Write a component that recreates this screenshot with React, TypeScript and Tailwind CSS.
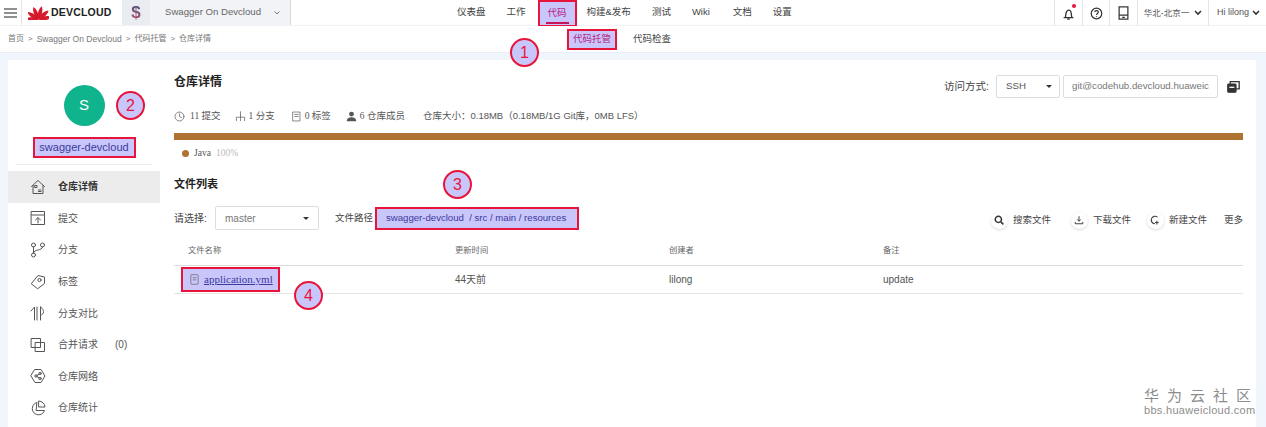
import type { ReactNode } from 'react';

const navItems = ['仪表盘', '工作', '代码', '构建&发布', '测试', 'Wiki', '文档', '设置'];

function Svg({ children, size = 16 }: { children: ReactNode; size?: number }) {
  return (
    <svg width={size} height={size} viewBox="0 0 16 16" fill="none" stroke="currentColor" strokeWidth="1" strokeLinecap="round" strokeLinejoin="round" className="shrink-0">
      {children}
    </svg>
  );
}

const sideItems: { label: string; extra?: string; active?: boolean; icon: ReactNode }[] = [
  {
    label: '仓库详情',
    active: true,
    icon: <Svg><path d="M1.5 7.5 8 1.5l6.5 6" /><path d="M3 6.5v8h10v-8" /><path d="M5 6.5h2v2H5zM8.5 11h2.5M8.5 12.5h2.5" /></Svg>,
  },
  {
    label: '提交',
    icon: <Svg><rect x="1.5" y="1.5" width="13" height="13" /><path d="M1.5 5h13M8 13v-5M5.5 10 8 7.5l2.5 2.5" /></Svg>,
  },
  {
    label: '分支',
    icon: <Svg><circle cx="3.5" cy="3" r="2" /><circle cx="12.5" cy="3" r="2" /><circle cx="3.5" cy="13" r="2" /><path d="M3.5 5v6M12.5 5c0 4-9 2-9 6" /></Svg>,
  },
  {
    label: '标签',
    icon: <Svg><path d="M1.5 9.5 8 1.5l6.5 1.5v6.5l-6.5 5z" /><circle cx="9.5" cy="6" r="1.6" /></Svg>,
  },
  {
    label: '分支对比',
    icon: <Svg><path d="M1 6 4.5 2v13M7 2v13M10.5 15V2M10.5 2c3 2 3 4 3 5s-1 3-3 3" /></Svg>,
  },
  {
    label: '合并请求',
    extra: '(0)',
    icon: <Svg><rect x="1.5" y="1.5" width="9" height="9" /><rect x="5.5" y="5.5" width="9" height="9" /></Svg>,
  },
  {
    label: '仓库网络',
    icon: <Svg><path d="M5 1.5h6L15 8l-4 6.5H5L1 8z" /><circle cx="6" cy="8" r="1.2" /><circle cx="10" cy="5.5" r="1.2" /><circle cx="10" cy="10.5" r="1.2" /><path d="m7 7.4 2-1.3M7 8.6l2 1.3" /></Svg>,
  },
  {
    label: '仓库统计',
    icon: <Svg><path d="M6.5 2.5a6.3 6.3 0 1 0 8 8H6.5z" /><path d="M9 1a6.3 6.3 0 0 1 6 6H9z" /></Svg>,
  },
];

function Callout({ n, className }: { n: number; className: string }) {
  return (
    <div className={`absolute w-[29px] h-[29px] rounded-full border-2 border-[#e8153a] bg-[#c9c6fb] text-[#e8153a] text-[16px] flex items-center justify-center ${className}`}>
      {n}
    </div>
  );
}

function Logo() {
  const angles = [-84, -52, -18, 18, 52, 84];
  return (
    <svg width="21" height="15" viewBox="0 0 21 15" className="shrink-0">
      {angles.map(a => (
        <path key={a} d="M10.5 14.5C7 10 7.5 4 9.5 1c2.5 3 3.5 9 1 13.5z" fill="#d6192c" transform={`rotate(${a} 10.5 14.5)`} />
      ))}
    </svg>
  );
}

function Chevron() {
  return (
    <svg width="8" height="6" viewBox="0 0 8 6" fill="none" stroke="#333" strokeWidth="1.6" className="shrink-0">
      <path d="m1 1 3 3 3-3" />
    </svg>
  );
}

function Caret() {
  return <span className="w-0 h-0 border-x-[3px] border-x-transparent border-t-[3px] border-t-[#333]" />;
}

function Action({ label, icon }: { label: string; icon: ReactNode }) {
  return (
    <div className="flex items-center gap-[5px]">
      <span className="w-[17px] h-[17px] rounded-full bg-white shadow-[0_1px_3px_rgba(0,0,0,0.15)] flex items-center justify-center text-[#444]">
        {icon}
      </span>
      <span>{label}</span>
    </div>
  );
}

export default function App() {
  return (
    <div className="relative w-[1266px] h-[427px] overflow-hidden bg-[#f1f5fc] text-[#444] text-[10px] font-['Liberation_Sans','Noto_Sans_CJK_SC',sans-serif]">
      {/* top bar */}
      <div className="relative h-[26px] bg-white flex items-stretch border-b border-[#f0f2f5]">
        <div className="w-[22px] flex items-center justify-center border-r border-[#e5e5e5]">
          <svg width="13" height="10" viewBox="0 0 13 10" stroke="#222" strokeWidth="1.2">
            <path d="M0 1h13M0 5h13M0 9h13" />
          </svg>
        </div>
        <div className="w-[100px] flex items-center gap-[2px] pl-[6px]">
          <Logo />
          <span className="text-[#222] font-bold text-[10.5px] tracking-[0.2px]">DEVCLOUD</span>
        </div>
        <div className="w-[28px] bg-[#e9ecf1] flex items-center justify-center text-[17px] font-bold">
          <span className="bg-linear-to-b from-[#23527f] to-[#d0386a] bg-clip-text text-transparent">$</span>
        </div>
        <div className="w-[141px] bg-[#f1f3f6] border-r border-[#d9d9d9] flex items-center pl-[15px] gap-[13px] text-[9.6px] text-[#666]">
          Swagger On Devcloud
          <svg width="6" height="4" viewBox="0 0 6 4" fill="none" stroke="#777"><path d="m.5.5 2.5 2.5L5.5.5" /></svg>
        </div>
        <nav className="ml-[166px] flex items-center gap-[21px] text-[9.5px] text-[#444]">
          {navItems.map(item =>
            item === '代码' ? (
              <span key={item} className="-ml-[9px] -mr-[11px] relative h-[27px] w-[39px] mt-px flex items-center justify-center border-2 border-[#e8153a] bg-[#c9c6fb] text-[#b5207f]">
                {item}
                <span className="absolute bottom-[1px] left-[6px] right-[6px] h-[1.5px] bg-[#c2185b]" />
              </span>
            ) : (
              <span key={item} className={item === 'Wiki' ? 'mr-[2px]' : ''}>{item}</span>
            ),
          )}
        </nav>
        <div className="absolute right-0 top-0 h-[26px] flex items-stretch text-[#333]">
          <div className="w-[28px] border-l border-[#e5e5e5] flex items-center justify-center relative">
            <svg width="13" height="13" viewBox="0 0 16 16" fill="none" stroke="#333" strokeWidth="1.6"><path d="M2 13h12M4 13c1-2 0-4 1.5-7C7 3 10 3 11 6c1 3 0 5 1.5 7M6.5 15h3" /></svg>
            <span className="absolute top-[4px] right-[6px] w-[4px] h-[4px] rounded-full bg-[#e8153a]" />
          </div>
          <div className="w-[27px] border-l border-[#e5e5e5] flex items-center justify-center">
            <svg width="13" height="13" viewBox="0 0 16 16" fill="none" stroke="#333" strokeWidth="1.5"><circle cx="8" cy="8" r="6.5" /><path d="M5.8 6.2C6 3.8 10.2 4 10.2 6.3 10.2 8 8 8 8 9.8M8 11.3v1" /></svg>
          </div>
          <div className="w-[28px] border-l border-[#e5e5e5] flex items-center justify-center">
            <svg width="13" height="14" viewBox="0 0 14 16" fill="none" stroke="#333" strokeWidth="1.4"><rect x="2" y="1" width="10" height="14" /><path d="M2 10.5h10M5.5 13h3" /></svg>
          </div>
          <div className="w-[71px] border-l border-[#e5e5e5] flex items-center justify-center gap-[5px] text-[8.5px] text-[#555]">
            华北-北京一 <Chevron />
          </div>
          <div className="w-[58px] border-l border-[#e5e5e5] flex items-center pl-[8px] gap-[3px] text-[9px] text-[#555]">
            Hi lilong <Chevron />
          </div>
        </div>
      </div>

      {/* breadcrumb and sub nav */}
      <div className="relative h-[27px] bg-white border-b border-[#e6edf7] flex items-center pl-[8px] text-[8px] text-[#777] gap-[4px]">
        <span>首页</span><span>&gt;</span><span className="text-[8.5px]">Swagger On Devcloud</span><span>&gt;</span><span>代码托管</span><span>&gt;</span><span>仓库详情</span>
        <div className="absolute left-[567px] top-[3px] flex items-center gap-[16px] text-[9.5px] text-[#444]">
          <span className="w-[50px] h-[21px] flex items-center justify-center border-2 border-[#e8153a] bg-[#c9c6fb] text-[#b5207f]">代码托管</span>
          <span>代码检查</span>
        </div>
      </div>

      {/* card */}
      <div className="mx-[10px] ml-[8px] mt-[7px] h-[400px] bg-white flex">
        <aside className="w-[152px] shrink-0">
          <div className="pt-[25px] flex flex-col items-center">
            <div className="w-[41px] h-[41px] rounded-full bg-[#10b48c] text-white text-[15px] flex items-center justify-center">S</div>
            <div className="mt-[11px] w-[103px] h-[21px] flex items-center justify-center border-2 border-[#e8153a] bg-[#c9c6fb] text-[#3b3a9a] text-[11px]">swagger-devcloud</div>
          </div>
          <div className="mx-[8px] mt-[6px] border-t border-[#eee]" />
          <ul className="mt-[6px]">
            {sideItems.map(item => (
              <li key={item.label} className={`h-[31.6px] flex items-center pl-[22px] gap-[12px] ${item.active ? 'bg-[#ececec] font-semibold text-[#333]' : 'text-[#555]'}`}>
                <span className="text-[#555] font-normal">{item.icon}</span>
                <span>{item.label}</span>
                {item.extra && <span className="ml-[5px]">{item.extra}</span>}
              </li>
            ))}
          </ul>
        </aside>

        <main className="flex-1 pl-[14px] pr-[13px] min-w-0">
          <div className="flex items-start justify-between h-[45px]">
            <h1 className="mt-[14px] text-[12px] font-bold text-[#222] leading-[16px]">仓库详情</h1>
            <div className="flex items-center mt-[15px] text-[9.7px]">
              <span className="mr-[7px] text-[10.5px]">访问方式:</span>
              <div className="w-[64px] h-[23px] pl-[9px] pr-[7px] border border-[#ddd] rounded-[2px] flex items-center justify-between text-[#555]">SSH <Caret /></div>
              <div className="ml-[3px] w-[155px] h-[23px] pl-[8px] border border-[#ddd] rounded-[2px] flex items-center text-[#777] whitespace-nowrap">git@codehub.devcloud.huaweic</div>
              <svg className="ml-[9px] mr-[3px]" width="13" height="13" viewBox="0 0 16 16" fill="none" stroke="#333" strokeWidth="1.6"><rect x="1" y="5" width="10" height="10" rx="1" fill="#333" /><path d="M4 5V2h11v9h-4" /><path d="M3 9h6" stroke="#fff" /></svg>
            </div>
          </div>

          <div className="mt-[3px] h-[16px] flex items-center text-[#555] text-[9.5px]">
            <span className="flex items-center gap-[5px] font-['Liberation_Serif','Noto_Sans_CJK_SC',serif]">
              <Svg size={11}><circle cx="8" cy="8" r="6.5" /><path d="M8 4v4l3 1.5" /></Svg>11 提交
            </span>
            <span className="ml-[14px] flex items-center gap-[3px] font-['Liberation_Serif','Noto_Sans_CJK_SC',serif]">
              <Svg size={11}><path d="M8 1v6M2 14v-5h12v5M8 7v7" /></Svg>1 分支
            </span>
            <span className="ml-[16px] flex items-center gap-[3px] font-['Liberation_Serif','Noto_Sans_CJK_SC',serif]">
              <Svg size={11}><rect x="3" y="1.5" width="10" height="13" /><path d="M5.5 5h5M5.5 8h5" /></Svg>0 标签
            </span>
            <span className="ml-[15px] flex items-center gap-[3px] font-['Liberation_Serif','Noto_Sans_CJK_SC',serif]">
              <svg width="11" height="11" viewBox="0 0 16 16" fill="#555"><circle cx="8" cy="4.5" r="3.5" /><path d="M1 15c0-4 3-6 7-6s7 2 7 6z" /></svg>6 仓库成员
            </span>
            <span className="ml-[18px]">仓库大小：0.18MB（0.18MB/1G Git库，0MB LFS）</span>
          </div>

          <div className="mt-[9px] h-[7px] bg-[#b07230]" />

          <div className="mt-[7px] pl-[8px] h-[12px] flex items-center gap-[5px] text-[9.5px] font-['Liberation_Serif',serif]">
            <span className="w-[7px] h-[7px] rounded-full bg-[#b07230]" />
            <span className="text-[#555]">Java</span>
            <span className="text-[#bbb]">100%</span>
          </div>

          <h2 className="mt-[17px] text-[11px] font-bold text-[#222] leading-[16px]">文件列表</h2>

          <div className="mt-[14px] h-[24px] flex items-center justify-between">
            <div className="flex items-center">
              <span className="text-[10px] w-[41px]">请选择:</span>
              <div className="w-[104px] h-[24px] pl-[9px] pr-[9px] border border-[#ddd] rounded-[2px] flex items-center justify-between text-[#777] text-[10px]">master <Caret /></div>
              <span className="ml-[16px] text-[9.5px]">文件路径</span>
              <span className="ml-[2px] w-[204px] h-[23px] pl-[9px] flex items-center whitespace-pre border-2 border-[#e8153a] bg-[#c9c6fb] text-[#3b3a9a] text-[9.6px]">swagger-devcloud  / src / main / resources</span>
            </div>
            <div className="flex items-center text-[9.5px] mt-[4px]">
              <Action label="搜索文件" icon={<svg width="10" height="10" viewBox="0 0 16 16" fill="none" stroke="#333" strokeWidth="2.4"><circle cx="7" cy="7" r="5" /><path d="m11 11 4 4" /></svg>} />
              <span className="ml-[20px]"><Action label="下载文件" icon={<svg width="10" height="10" viewBox="0 0 16 16" fill="none" stroke="#444" strokeWidth="1.6"><path d="M8 2v8M5 7l3 3 3-3M2 11v3h12v-3" /></svg>} /></span>
              <span className="ml-[16px]"><Action label="新建文件" icon={<svg width="10" height="10" viewBox="0 0 16 16" fill="none" stroke="#444" strokeWidth="1.8"><path d="M12 3.5A6 6 0 1 0 8 14M11 9v6M8 12h6" /></svg>} /></span>
              <span className="ml-[17px]">更多</span>
            </div>
          </div>

          <div className="mt-[12px]">
            <div className="h-[24px] grid grid-cols-[267px_214px_214px_1fr] items-end pb-[9px] pl-[14px] border-b border-[#ddd] text-[8.3px] text-[#666]">
              <span>文件名称</span>
              <span>更新时间</span>
              <span>创建者</span>
              <span>备注</span>
            </div>
            <div className="h-[28px] grid grid-cols-[267px_214px_214px_1fr] items-center pl-[14px] border-b border-[#e5e5e5] text-[10px] text-[#555]">
              <div className="-ml-[7px]">
                <a className="w-[99px] h-[25px] pl-[7px] flex items-center gap-[5px] border-2 border-[#e8153a] bg-[#c9c6fb] text-[#3b3a9a] text-[11px] underline whitespace-nowrap font-['Liberation_Serif',serif]">
                  <svg width="9" height="11" viewBox="0 0 12 15" fill="none" stroke="#666"><rect x="1" y="1" width="10" height="13" rx="1" /><path d="M3.5 5h5M3.5 8h5" /></svg>
                  application.yml
                </a>
              </div>
              <span>44天前</span>
              <span>lilong</span>
              <span>update</span>
            </div>
          </div>
        </main>
      </div>

      {/* numbered marks over the page */}
      <Callout n={1} className="left-[510px] top-[38px]" />
      <Callout n={2} className="left-[116px] top-[91px]" />
      <Callout n={3} className="left-[443px] top-[170px]" />
      <Callout n={4} className="left-[294px] top-[281px]" />

      {/* watermark */}
      <div className="absolute left-[1144px] top-[388px] text-[#8d8d8d] leading-none">
        <div className="text-[15px] tracking-[8px] whitespace-nowrap">华为云社区</div>
        <div className="mt-[2px] text-[11px] tracking-[0.3px]">bbs.huaweicloud.com</div>
      </div>
    </div>
  );
}
